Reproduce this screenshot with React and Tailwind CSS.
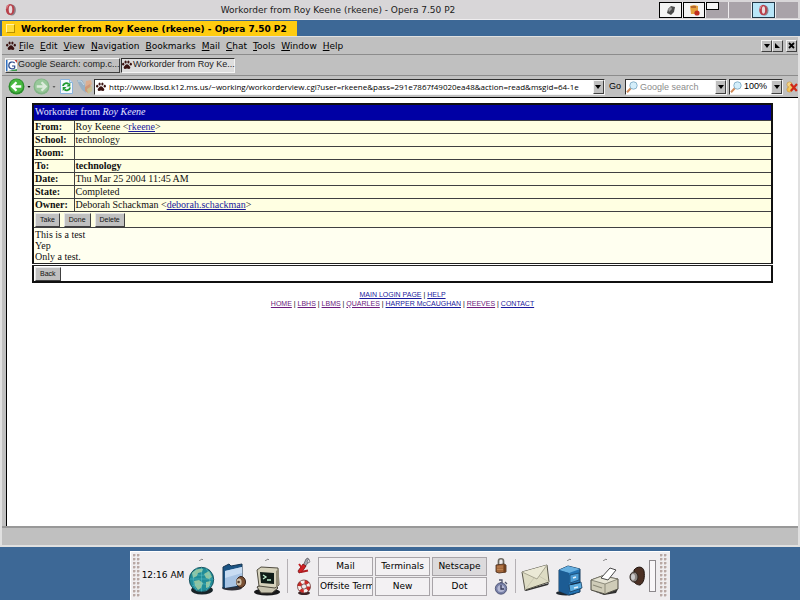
const UI = "font-['DejaVu_Sans',sans-serif] text-[9px]";
const SMALL = "font-['Liberation_Sans',sans-serif] text-[9px]";
const RAISED =
  "bg-[#c0c0c0] border border-t-[#f4f4f4] border-l-[#f4f4f4] border-r-[#404040] border-b-[#404040]";
const SUNKEN =
  "bg-white border border-t-[#303030] border-l-[#303030] border-r-[#f4f4f4] border-b-[#f4f4f4]";

function OperaIcon({ className }) {
  return (
    <svg className={className} viewBox="0 0 12 14" aria-hidden="true">
      <ellipse cx="7.500" cy="7.500" rx="4.300" ry="6" fill="#8c8088" />
      <ellipse cx="5.600" cy="7" rx="4.600" ry="6" fill="#b8404a" />
      <ellipse cx="6" cy="7" rx="1.900" ry="4.400" fill="#e8dcde" />
      <path d="M2 6c.2-2 1-3.600 2.200-4.300" stroke="#e898a0" strokeWidth="1" fill="none" />
    </svg>
  );
}

function PawIcon() {
  return (
    <svg className="w-[10px] h-[10px] shrink-0" viewBox="0 0 10 10" aria-hidden="true">
      <g fill="#3b1412">
        <path d="M5 4.300c1.500 0 1.800 1.500 2.900 2.300.9.800.3 2.400-.9 2.400-.8 0-1.200-.4-2-.4s-1.200.4-2 .4c-1.200 0-1.800-1.600-.9-2.400C3.200 5.800 3.500 4.300 5 4.300z" />
        <ellipse cx="1.200" cy="4.200" rx="1.100" ry="1.400" />
        <ellipse cx="3.600" cy="2" rx="1.100" ry="1.500" />
        <ellipse cx="6.400" cy="2" rx="1.100" ry="1.500" />
        <ellipse cx="8.800" cy="4.200" rx="1.100" ry="1.400" />
      </g>
    </svg>
  );
}

function GoogleIcon() {
  return (
    <svg className="w-[11px] h-[11px] shrink-0" viewBox="0 0 11 11" aria-hidden="true">
      <path d="M0 0h11v11H0z" fill="#fff" />
      <path d="M0 0h1.500v11H0z" fill="#2f6fc0" />
      <path d="M8.500 0H11v3z" fill="#c9423a" />
      <path d="M2 11h9v-2z" fill="#3a9a4a" />
      <path d="M8.700 3.200C7 1.200 2.800 1.700 2.800 5.500S7.400 9.600 8.700 7.800V6H6" stroke="#27488a" strokeWidth="1.200" fill="none" />
    </svg>
  );
}

function NavArrow({ forward }) {
  return (
    <svg className="w-[17px] h-[17px]" viewBox="0 0 16 16" aria-hidden="true">
      <circle cx="8" cy="8" r="7.500" fill={forward ? "#82b486" : "#2c8c2c"} />
      <circle cx="8" cy="7.500" r="6.300" fill={forward ? "#98c89a" : "#48b840"} />
      <path
        d={forward ? "M3.500 8h8M8 4l4 4-4 4" : "M12.500 8h-8M8 4L4 8l4 4"}
        stroke={forward ? "#dcebdc" : "#fff"}
        strokeWidth="2.200"
        fill="none"
      />
    </svg>
  );
}

function ReloadIcon() {
  return (
    <svg className="w-[13px] h-[15px]" viewBox="0 0 13 15" aria-hidden="true">
      <path d="M.5.5h9l3 3v11H.5z" fill="#f4f9ff" stroke="#8bb4dc" />
      <path d="M9.500.5v3h3" fill="#cfe2f5" stroke="#8bb4dc" />
      <path d="M3 7c.3-3 4-3.600 5.500-1.800M10 8.500c-.3 3-4 3.600-5.500 1.800" stroke="#1f9a30" strokeWidth="1.900" fill="none" />
      <path d="M10.300 3.500v4H6.500zM2.700 12V8h3.800z" fill="#1f9a30" />
    </svg>
  );
}

function WandIcon() {
  return (
    <svg className="w-[15px] h-[15px]" viewBox="0 0 15 15" aria-hidden="true">
      <path d="M0 1h5l3 5 1 8-4-3-3-5z" fill="#98b0c4" />
      <path d="M1 2h3l3 4" stroke="#c8dce8" strokeWidth="1" fill="none" />
      <path d="M9 2l5-1 1 4-4 5H8z" fill="#dcae90" />
      <path d="M8 8l5-3 1 4-3 5-3-2z" fill="#d09878" />
      <path d="M10 10l5-3v5l-4 3z" fill="#c8c090" />
    </svg>
  );
}

function LensIcon() {
  return (
    <svg className="w-[12px] h-[12px] shrink-0" viewBox="0 0 12 12" aria-hidden="true">
      <path d="M5 7L1 11.300" stroke="#d08a58" strokeWidth="2" />
      <circle cx="7.500" cy="4.500" r="3.700" fill="#d4eefa" stroke="#8ab4cc" />
    </svg>
  );
}

function StopStarIcon() {
  return (
    <svg className="w-[12px] h-[12px] shrink-0" viewBox="0 0 12 12" aria-hidden="true">
      <circle cx="3.500" cy="3.500" r="2.600" fill="#f4d488" stroke="#c89848" strokeWidth=".7" />
      <circle cx="3.500" cy="8.500" r="2.600" fill="#f0c050" stroke="#c89848" strokeWidth=".7" />
      <path d="M3 4h4v5H3z" fill="#f0c868" />
      <path d="M4.800 3l6 7M11 3l-6.200 7" stroke="#d02818" strokeWidth="2.200" />
    </svg>
  );
}

function Caret({ className = "w-[6px] h-[4px]" }) {
  return (
    <svg className={className} viewBox="0 0 6 4" aria-hidden="true">
      <path d="M0 0h6L3 4z" fill="#000" />
    </svg>
  );
}

function TopBar() {
  return (
    <header className="flex h-[20px] items-center border-b border-[#efedef] bg-[#d8d6d8] pl-[4px] pr-[2px]">
      <OperaIcon className="w-[13px] h-[13px]" />
      <p className={`${UI} flex-1 text-center leading-[14px] text-[#202020]`}>
        Workorder from Roy Keene (rkeene) - Opera 7.50 P2
      </p>
      <nav aria-label="Desktops" className="flex gap-px bg-[#efedef]">
        <button aria-label="Desktop 1" className="flex h-[16px] w-[23px] items-center justify-center border border-black bg-[#f4f4f4]">
          <svg className="w-[10px] h-[10px]" viewBox="0 0 10 10" aria-hidden="true">
            <path d="M2 4l3-3 4 1-1 5-3 3-4-2z" fill="#4a4a4a" />
            <path d="M2 4l3-2 1 2-3 3z" fill="#9a9a9a" />
          </svg>
        </button>
        <button aria-label="Desktop 2" className="flex h-[16px] w-[22px] items-center justify-center border border-black bg-[#f4f4f4]">
          <svg className="w-[11px] h-[12px]" viewBox="0 0 11 12" aria-hidden="true">
            <path d="M1 2l4-1 4 1v8H2z" fill="#e4a03c" />
            <path d="M2 2h5v2H2z" fill="#b8682c" />
            <circle cx="8" cy="9" r="2.600" fill="#c02c20" />
          </svg>
        </button>
        <button aria-label="Desktop 3" className="flex h-[16px] w-[22px] items-start bg-[#a9a3a9]">
          <span className="h-[8px] w-[13px] border border-black bg-[#f4f4f4]" />
        </button>
        <button aria-label="Desktop 4" className="h-[16px] w-[22px] bg-[#a9a3a9]" />
        <button aria-label="Desktop 5" className="flex h-[16px] w-[23px] items-center justify-center border border-[#203848] bg-[#b8e6f8]">
          <OperaIcon className="w-[11px] h-[12px]" />
        </button>
        <button aria-label="Desktop 6" className="h-[16px] w-[22px] bg-[#a9a3a9]" />
      </nav>
    </header>
  );
}

const MENUS = ["File", "Edit", "View", "Navigation", "Bookmarks", "Mail", "Chat", "Tools", "Window", "Help"];

function MenuBar() {
  return (
    <div className="flex h-[18px] items-center border-b border-[#8c8c8c] pl-[4px] pr-px">
      <PawIcon />
      <nav aria-label="Menu" className="ml-[3px] flex flex-1 gap-[6px]">
        {MENUS.map((menu) => (
          <button key={menu} className={`${UI} leading-[14px]`}>
            <span className="underline">{menu[0]}</span>
            {menu.slice(1)}
          </button>
        ))}
      </nav>
      <div className="flex">
        <button aria-label="Minimize" className={`${RAISED} flex h-[12px] w-[11px] items-center justify-center`}>
          <Caret />
        </button>
        <button aria-label="Restore" className={`${RAISED} flex h-[12px] w-[11px] items-center justify-center`}>
          <svg className="w-[5px] h-[5px]" viewBox="0 0 5 5" aria-hidden="true">
            <path d="M0 0l5 5H0z" />
          </svg>
        </button>
        <button aria-label="Close" className={`${RAISED} ml-[3px] flex h-[12px] w-[11px] items-center justify-center`}>
          <svg className="w-[7px] h-[7px]" viewBox="0 0 7 7" aria-hidden="true">
            <path d="M1 1l5 5M6 1L1 6" stroke="#000" strokeWidth="1.800" />
          </svg>
        </button>
      </div>
    </div>
  );
}

function TabBar() {
  return (
    <div className="flex h-[21px] items-center gap-px border-b border-[#8c8c8c] pl-[3px]" role="tablist">
      <button role="tab" aria-selected="false" className={`${RAISED} ${SMALL} flex h-[15px] w-[115px] items-center gap-px whitespace-nowrap text-[#202020]`}>
        <GoogleIcon />
        Google Search: comp.c...
      </button>
      <button
        role="tab"
        aria-selected="true"
        className={`${SMALL} flex h-[15px] w-[114px] items-center gap-px whitespace-nowrap border border-t-[#303030] border-l-[#303030] border-r-[#f4f4f4] border-b-[#f4f4f4] bg-[#dedede] text-[#202020]`}
      >
        <PawIcon />
        Workorder from Roy Ke...
      </button>
    </div>
  );
}

function AddressBar() {
  return (
    <div className={`${SMALL} flex h-[21px] items-center pl-[6px]`}>
      <button aria-label="Back" className="flex items-center gap-[2px]">
        <NavArrow />
        <Caret className="w-[4px] h-[2px]" />
      </button>
      <button aria-label="Forward" className="ml-[2px] flex items-center gap-[2px]">
        <NavArrow forward />
        <Caret className="w-[4px] h-[2px] opacity-50" />
      </button>
      <button aria-label="Reload" className="ml-[4px]">
        <ReloadIcon />
      </button>
      <button aria-label="Wand" className="ml-[4px]">
        <WandIcon />
      </button>
      <div className={`${SUNKEN} ml-[2px] flex h-[16px] min-w-0 flex-1 items-center pl-px`}>
        <PawIcon />
        <input
          aria-label="Address"
          className="ml-[3px] h-full min-w-0 flex-1 font-['Open_Sans',sans-serif] text-[8px] outline-none"
          defaultValue="http://www.lbsd.k12.ms.us/~working/workorderview.cgi?user=rkeene&pass=291e7867f49020ea48&action=read&msgid=64-1e"
        />
        <button aria-label="Address history" className={`${RAISED} flex h-[14px] w-[11px] items-center justify-center`}>
          <Caret />
        </button>
      </div>
      <button className="mx-[4px]">Go</button>
      <div className={`${SUNKEN} flex h-[16px] w-[102px] items-center`}>
        <LensIcon />
        <input
          aria-label="Google search"
          placeholder="Google search"
          className="ml-[2px] h-full min-w-0 flex-1 outline-none placeholder:text-[#8c8c8c]"
        />
        <button aria-label="Search engines" className={`${RAISED} flex h-[14px] w-[11px] items-center justify-center`}>
          <Caret />
        </button>
      </div>
      <div className={`${SUNKEN} relative ml-[2px] flex h-[16px] w-[54px] items-center`}>
        <LensIcon />
        <select aria-label="Zoom" className="h-full flex-1 appearance-none pl-[2px] outline-none">
          <option>100%</option>
        </select>
        <span className={`${RAISED} pointer-events-none absolute right-0 flex h-[14px] w-[11px] items-center justify-center`}>
          <Caret />
        </span>
      </div>
      <button aria-label="Clear" className="ml-[3px]">
        <StopStarIcon />
      </button>
    </div>
  );
}

const LINK = "text-[#1a1a9c] underline";
const VISITED = "text-[#6c1a7c] underline";

const FIELDS = [
  ["From", <>Roy Keene &lt;<a href="#rkeene" className={LINK}>rkeene</a>&gt;</>],
  ["School", "technology"],
  ["Room", ""],
  ["To", <b>technology</b>],
  ["Date", "Thu Mar 25 2004 11:45 AM"],
  ["State", "Completed"],
  ["Owner", <>Deborah Schackman &lt;<a href="#deborah" className={LINK}>deborah.schackman</a>&gt;</>],
];

function FormButton({ children }) {
  return (
    <button className="h-[14px] border border-t-[#e8e8e8] border-l-[#e8e8e8] border-r-[#404040] border-b-[#404040] bg-[#c0c0c0] px-[4px] font-['Liberation_Sans',sans-serif] text-[7px] leading-[10px]">
      {children}
    </button>
  );
}

function Workorder() {
  return (
    <table className="w-full border-collapse border-2 border-[#101010] font-['Liberation_Serif',serif] text-[10px] leading-[12px] text-[#101010]">
      <thead>
        <tr>
          <th colSpan={2} className="h-[16px] bg-[#0000a4] px-px py-0 text-left font-normal text-[#e4e4ff]">
            Workorder from <i>Roy Keene</i>
          </th>
        </tr>
      </thead>
      <tbody>
        {FIELDS.map(([label, value]) => (
          <tr key={label} className="bg-[#ffffe2]">
            <th scope="row" className="h-[13px] w-[41px] border border-[#404040] px-px py-0 text-left">
              {label}:
            </th>
            <td className="border border-[#404040] px-px py-0">{value}</td>
          </tr>
        ))}
        <tr className="bg-[#ffffe2]">
          <td colSpan={2} className="border border-[#404040] px-px pt-px pb-0">
            <div className="flex gap-[4px]">
              <FormButton>Take</FormButton>
              <FormButton>Done</FormButton>
              <FormButton>Delete</FormButton>
            </div>
          </td>
        </tr>
        <tr className="bg-[#fffff0]">
          <td colSpan={2} className="border-b-3 border-double border-[#202020] px-px py-px leading-[11px]">
            <p>This is a test</p>
            <p>Yep</p>
            <p>Only a test.</p>
          </td>
        </tr>
        <tr className="bg-white">
          <td colSpan={2} className="px-px pt-px pb-0">
            <div className="flex">
              <FormButton>Back</FormButton>
            </div>
          </td>
        </tr>
      </tbody>
    </table>
  );
}

const SITE_LINKS = [
  ["HOME", VISITED],
  ["LBHS", VISITED],
  ["LBMS", VISITED],
  ["QUARLES", VISITED],
  ["HARPER McCAUGHAN", LINK],
  ["REEVES", VISITED],
  ["CONTACT", LINK],
];

function SiteLinks() {
  return (
    <nav aria-label="Site" className="mt-[7px] text-center font-['Liberation_Sans',sans-serif] text-[7px] leading-[9px]">
      <p>
        <a href="#login" className={LINK}>MAIN LOGIN PAGE</a> | <a href="#help" className={LINK}>HELP</a>
      </p>
      <p>
        {SITE_LINKS.map(([name, style], i) => (
          <span key={name}>
            {i > 0 && " | "}
            <a href={`#${name}`} className={style}>{name}</a>
          </span>
        ))}
      </p>
    </nav>
  );
}

function GlobeIcon() {
  return (
    <svg className="w-[27px] h-[29px]" viewBox="0 0 27 29" aria-hidden="true">
      <ellipse cx="14" cy="24" rx="11" ry="4.500" fill="#182428" />
      <circle cx="13.500" cy="13.500" r="12.200" fill="#208c98" stroke="#1a5460" />
      <path d="M4 7c3-4 8-5 11-4l-1 3-4 1-1 3-4 2zM16 8l5-3 3 6-3 2-3-1zM6 15l5-1 4 3-2 5-3 2-3-4zM18 16l5-1-2 6-3 1z" fill="#90c4a0" />
      <path d="M2 13h23M13.500 1.500v24M4 7c6 3 13 3 19 0M4 20c6-3 13-3 19 0M9 2c-5 8-5 16 0 23M18 2c5 8 5 16 0 23" stroke="#6ed0d4" strokeWidth=".4" fill="none" />
    </svg>
  );
}

function FolderIcon() {
  return (
    <svg className="w-[26px] h-[28px]" viewBox="0 0 26 28" aria-hidden="true">
      <ellipse cx="11" cy="25" rx="10" ry="2.500" fill="#303038" />
      <path d="M2 4l6-3 2 2 11-2v22L2 25z" fill="#1c5484" stroke="#163450" />
      <path d="M4 8l17-4v18L4 25z" fill="#a8c4e4" />
      <path d="M4 8l17-4v6L4 15z" fill="#c8dcf2" />
      <ellipse cx="20" cy="19" rx="4.500" ry="5.500" fill="#7a5034" stroke="#32201a" />
      <ellipse cx="18" cy="19" rx="2.600" ry="3.600" fill="#d0c0a8" />
      <circle cx="17.600" cy="19" r="1.300" fill="#50382c" />
    </svg>
  );
}

function TerminalIcon() {
  return (
    <svg className="w-[27px] h-[30px]" viewBox="0 0 27 30" aria-hidden="true">
      <ellipse cx="13" cy="26" rx="13" ry="3.500" fill="#18181a" />
      <path d="M3 21l6-3h11l4 4-6 5H7z" fill="#c8c4b0" stroke="#403c34" />
      <path d="M3 4l4-3 17 1 1 17-4 3L5 20z" fill="#d6d2bc" stroke="#504c40" />
      <path d="M22 5l3-2v16l-3 2z" fill="#928c78" />
      <path d="M6 6l14 1v11L7 17z" fill="#101c18" />
      <path d="M9 9l3 2-3 2M13 14h4" stroke="#c0f0d0" strokeWidth="1.300" fill="none" />
    </svg>
  );
}

function KnifeIcon() {
  return (
    <svg className="w-[14px] h-[17px]" viewBox="0 0 14 17" aria-hidden="true">
      <path d="M6 9l3-7 2-1 1 3-4 6z" fill="#a8a8b0" stroke="#505058" strokeWidth=".7" />
      <path d="M10 4l2-2 1 3-2 1z" fill="#d8d8dc" stroke="#606068" strokeWidth=".6" />
      <path d="M1 14l5-7 3 2-4 6-3 1z" fill="#d42024" stroke="#741416" strokeWidth=".8" />
      <path d="M2 7l3 4" stroke="#c41c20" strokeWidth="1.800" />
      <path d="M4 15l7-1.500" stroke="#b01c20" strokeWidth="1.800" />
    </svg>
  );
}

function LifebuoyIcon() {
  return (
    <svg className="w-[14px] h-[16px]" viewBox="0 0 14 16" aria-hidden="true">
      <ellipse cx="7" cy="14" rx="6" ry="2" fill="#3c2426" />
      <circle cx="7" cy="7.500" r="4.700" fill="none" stroke="#f6f0ee" strokeWidth="3.600" />
      <circle cx="7" cy="7.500" r="4.700" fill="none" stroke="#cc2a26" strokeWidth="3.600" strokeDasharray="3.700 3.700" />
      <circle cx="7" cy="7.500" r="6.500" fill="none" stroke="#5c2020" strokeWidth=".7" />
      <circle cx="7" cy="7.500" r="2.600" fill="none" stroke="#5c2020" strokeWidth=".7" />
    </svg>
  );
}

function LockIcon() {
  return (
    <svg className="w-[12px] h-[17px]" viewBox="0 0 12 17" aria-hidden="true">
      <path d="M3.500 8V4C3.500 1 8.500 1 8.500 4v4" stroke="#6c6860" strokeWidth="1.700" fill="none" />
      <path d="M1 8l8-1 2 1v7l-7 1-3-1z" fill="#a4683c" stroke="#402414" strokeWidth=".8" />
      <path d="M8.500 8v8l2.500-1V8z" fill="#70401f" />
      <path d="M2 10h6M2 12.500h6" stroke="#c48c58" strokeWidth=".8" />
    </svg>
  );
}

function TimerIcon() {
  return (
    <svg className="w-[14px] h-[16px]" viewBox="0 0 14 16" aria-hidden="true">
      <path d="M5 1h3v3H6" stroke="#50546c" strokeWidth="1.300" fill="none" />
      <circle cx="7" cy="9.500" r="5.700" fill="#7880a8" stroke="#444a6c" strokeWidth=".8" />
      <circle cx="7" cy="9.500" r="3.600" fill="#b4b8d4" />
      <path d="M7 6v4h3" stroke="#343858" strokeWidth="1.300" fill="none" />
      <path d="M11 3l2 2" stroke="#50546c" strokeWidth="1.300" />
    </svg>
  );
}

function EnvelopeIcon() {
  return (
    <svg className="w-[29px] h-[28px]" viewBox="0 0 29 28" aria-hidden="true">
      <path d="M3 26l25-7-1 2-22 6z" fill="#303030" />
      <path d="M1 8l25-7 2 17-24 8z" fill="#dedcc4" stroke="#58564a" />
      <path d="M1 8l15 7L26 1" stroke="#a8a692" fill="#ebe9d6" />
      <path d="M4 26l9-12M28 18l-10-6" stroke="#c4c2ac" strokeWidth=".8" />
    </svg>
  );
}

function CabinetIcon() {
  return (
    <svg className="w-[27px] h-[31px]" viewBox="0 0 27 31" aria-hidden="true">
      <ellipse cx="10" cy="28" rx="10" ry="2.500" fill="#202830" />
      <path d="M3 5l9-4 12 3v23l-11 3-10-4z" fill="#2474b4" stroke="#143c60" />
      <path d="M3 5l9-4 12 3-11 4z" fill="#68b0e0" />
      <path d="M3 5l10 3v22L3 26z" fill="#1c5c94" />
      <path d="M14 10l9-2v7l-9 3z" fill="#4c9cd4" stroke="#143c60" strokeWidth=".7" />
      <path d="M13 20l12-3 1 6-12 4z" fill="#5cacdf" stroke="#143c60" strokeWidth=".8" />
      <path d="M15 20l9-2v-1l-10 2z" fill="#102c48" />
      <path d="M17 13l3-1M18 23l4-1" stroke="#e4f0f8" strokeWidth="1.500" />
    </svg>
  );
}

function PrinterIcon() {
  return (
    <svg className="w-[30px] h-[28px]" viewBox="0 0 30 28" aria-hidden="true">
      <path d="M3 24l12 3 13-5-2 4-12 2z" fill="#303030" />
      <path d="M1 13l11-4 16 3v10l-13 5-14-4z" fill="#cfccb8" stroke="#4c4a40" />
      <path d="M1 13l11-4 16 3-13 5z" fill="#e6e4d4" stroke="#6c6a5c" strokeWidth=".7" />
      <path d="M11 11l9-10 6 2-8 10z" fill="#fff" stroke="#484848" />
      <path d="M15 17v10" stroke="#8c8a78" />
      <path d="M3 18l9 3" stroke="#8c8a78" strokeWidth="1.300" />
    </svg>
  );
}

function SpeakerIcon() {
  return (
    <svg className="w-[16px] h-[21px]" viewBox="0 0 16 21" aria-hidden="true">
      <path d="M5 4c3-4 9-4 10 1 1 6 0 12-4 14-4 0-6-3-6-3z" fill="#4c3024" stroke="#20140f" />
      <ellipse cx="5" cy="11" rx="4" ry="5" fill="#8c8480" stroke="#2c2420" />
      <ellipse cx="4" cy="11" rx="2" ry="3" fill="#cccacc" />
    </svg>
  );
}

function Grip() {
  return (
    <div
      className="h-[44px] w-[8px] bg-[radial-gradient(circle_at_1px_1px,#b8a8a4_1px,transparent_2px)] bg-[length:4px_4px]"
      aria-hidden="true"
    />
  );
}

function Launcher({ label, drawer, className = "", children }) {
  return (
    <button aria-label={label} className={`flex h-full flex-col items-center ${className}`}>
      <svg className="mt-[6px] h-[3px] w-[5px]" viewBox="0 0 5 3" aria-hidden="true">
        {drawer && <path d="M0 3l3-2 1 1" stroke="#888" fill="none" />}
      </svg>
      <span className="flex flex-1 items-center">{children}</span>
    </button>
  );
}

const DESKS = ["Mail", "Terminals", "Netscape", "Offsite Term", "New", "Dot"];

function Panel() {
  return (
    <footer className="flex h-[53px] items-end justify-center bg-[#3d6896]">
      <div className="flex h-[49px] items-center border-t border-l border-white bg-[#efedef] px-[2px]">
        <Grip />
        <time className={`${UI} w-[44px] text-center whitespace-nowrap`}>12:16 AM</time>
        <Launcher label="Web" drawer className="ml-[2px] w-[28px]">
          <GlobeIcon />
        </Launcher>
        <Launcher label="Files" className="ml-[5px] w-[28px] pb-[7px]">
          <FolderIcon />
        </Launcher>
        <Launcher label="Terminal" drawer className="ml-[5px] w-[28px]">
          <TerminalIcon />
        </Launcher>
        <div className="ml-[6px] h-[34px] w-px bg-[#b4b0b4]" />
        <div className="ml-[9px] flex flex-col items-center gap-[5px]">
          <button aria-label="Settings"><KnifeIcon /></button>
          <button aria-label="Help"><LifebuoyIcon /></button>
        </div>
        <div className="ml-[7px] grid grid-cols-3 gap-x-[2px] gap-y-px">
          {DESKS.map((desk) => (
            <button
              key={desk}
              className={`${UI} flex h-[19px] w-[55px] items-center overflow-hidden whitespace-nowrap border border-[#a8a4a8] px-px leading-[14px] ${
                desk === "Netscape" ? "bg-[#dcdadc]" : "bg-[#f3f1f3]"
              } ${desk === "Offsite Term" ? "justify-start" : "justify-center"}`}
            >
              {desk}
            </button>
          ))}
        </div>
        <div className="ml-[7px] flex flex-col items-center gap-[5px]">
          <button aria-label="Lock"><LockIcon /></button>
          <button aria-label="Log out"><TimerIcon /></button>
        </div>
        <div className="ml-[7px] h-[34px] w-px bg-[#b4b0b4]" />
        <Launcher label="Mail" className="ml-[5px] w-[29px] pb-[6px]">
          <EnvelopeIcon />
        </Launcher>
        <Launcher label="Archive" drawer className="ml-[6px] w-[27px]">
          <CabinetIcon />
        </Launcher>
        <Launcher label="Print" drawer className="ml-[7px] w-[30px]">
          <PrinterIcon />
        </Launcher>
        <Launcher label="Sound" className="ml-[8px] w-[18px] pb-[8px]">
          <SpeakerIcon />
        </Launcher>
        <div className="ml-[3px] mr-[4px] h-[32px] w-[7px] border border-[#8c888c] bg-[#f8f6f8]" />
        <Grip />
      </div>
    </footer>
  );
}

export default function App() {
  return (
    <div className="flex min-h-screen flex-col bg-[#3d6896] text-black">
      <TopBar />
      <div className="flex h-[16px] bg-[#3d6896] pt-px pl-[2px]">
        <h1 className={`${UI} flex items-center gap-[6px] bg-[#ffcc10] pl-[4px] pr-[10px] font-bold leading-[14px]`}>
          <span className="h-[9px] w-[9px] border border-t-[#fff4a8] border-l-[#fff4a8] border-r-[#b89000] border-b-[#b89000] bg-[#ffdc38]" />
          Workorder from Roy Keene (rkeene) - Opera 7.50 P2
        </h1>
      </div>
      <div className="flex flex-1 flex-col border-2 border-t border-[#e0e0e0] bg-[#c0c0c0]">
        <MenuBar />
        <TabBar />
        <AddressBar />
        <main className="ml-[4px] flex-1 border-t border-l border-black bg-white px-[25px] pt-[5px]">
          <Workorder />
          <SiteLinks />
        </main>
        <div className="h-[19px] border-t-2 border-[#989898]" />
      </div>
      <Panel />
    </div>
  );
}
